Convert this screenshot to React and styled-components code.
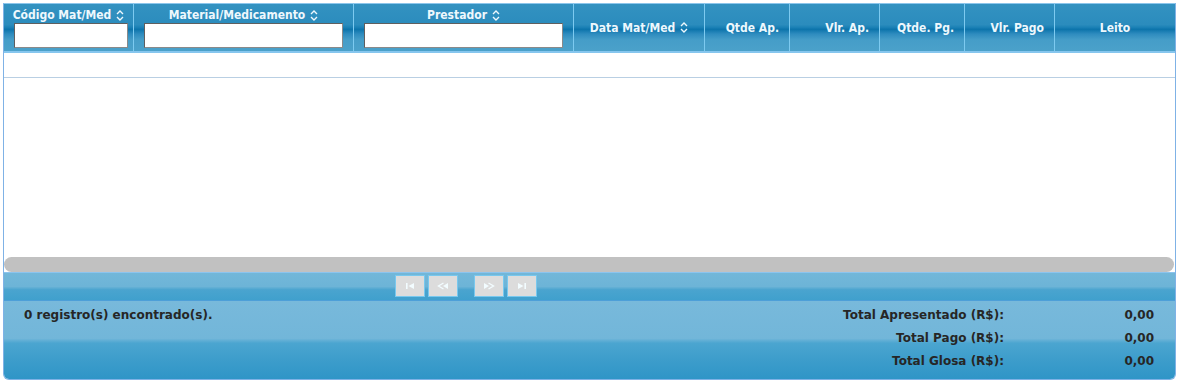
import React from 'react';
import styled, { createGlobalStyle } from 'styled-components';

const GlobalStyle = createGlobalStyle`
  html, body {
    margin: 0;
    padding: 0;
    background: #ffffff;
  }
  body {
    font-family: "DejaVu Sans", Verdana, sans-serif;
    font-size: 12px;
  }
`;

const Page = styled.div`
  padding: 3px 4px 2px 3px;
`;

const Panel = styled.div`
  width: 1171px;
  border: 1px solid #7fb2e6;
  border-top-color: #8cc6ec;
  border-radius: 0 0 6px 6px;
  overflow: hidden;
`;

const HeaderRow = styled.div`
  display: flex;
  height: 47px;
  border-bottom: 2px solid #86c6ee;
  background: linear-gradient(
    to bottom,
    #3392c1 0%,
    #2b8cbd 44%,
    #1a80b5 50%,
    #0c74ab 54%,
    #2f8cbf 64%,
    #459dc8 76%,
    #4ba1ca 100%
  );
  color: #eef8fd;
  font-family: "DejaVu Sans Condensed", "DejaVu Sans", sans-serif;
  font-weight: bold;
`;

const HeadCell = styled.div`
  width: ${(p) => p.$w}px;
  flex: ${(p) => (p.$grow ? '1' : 'none')};
  box-sizing: border-box;
  border-right: ${(p) => (p.$last ? 'none' : '1px solid #7dcaf0')};
  display: flex;
  flex-direction: column;
  align-items: ${(p) => (p.$filter ? 'center' : 'stretch')};
  justify-content: ${(p) => (p.$filter ? 'flex-start' : 'center')};
  padding: ${(p) => (p.$filter ? '4px 0 0' : '0 10px 0 10px')};
  text-align: ${(p) => p.$align || 'center'};
  white-space: nowrap;
`;

const Title = styled.div`
  display: flex;
  align-items: center;
  justify-content: ${(p) => p.$justify || 'center'};
  gap: 5px;
  line-height: 14px;
`;

const FilterInput = styled.input`
  box-sizing: border-box;
  width: ${(p) => p.$w}px;
  height: 25px;
  margin-top: 1px;
  margin-left: ${(p) => p.$shift || 0}px;
  border: 1px solid #5f5f5f;
  border-right-color: #8a8a8a;
  border-bottom-color: #8a8a8a;
  background: #ffffff;
  padding: 0 4px;
  outline: none;
`;

const Body = styled.div`
  height: 219px;
  background: #ffffff;
  display: flex;
  flex-direction: column;
`;

const EmptyRow = styled.div`
  height: 24px;
  border-bottom: 1px solid #b9cfe3;
`;

const Spacer = styled.div`
  flex: 1;
`;

const ScrollThumb = styled.div`
  height: 15px;
  margin: 0 1px 0 0;
  background: #c1c1c1;
  border-radius: 8px;
`;

const Paginator = styled.div`
  height: 25px;
  border-top: 1px solid #8cc4ee;
  border-bottom: 1px solid #4d9fd8;
  display: flex;
  align-items: flex-start;
  padding: 2px 0 0 391px;
  gap: 3px;
  background: linear-gradient(
    to bottom,
    #72b7d9 0%,
    #6db4d7 50%,
    #4aa4cf 62%,
    #40a0cd 100%
  );
`;

const PageButton = styled.div`
  width: 28px;
  height: 20px;
  border: 1px solid #78c8ee;
  background: #dcdcdc;
  display: flex;
  align-items: center;
  justify-content: center;
  margin-left: ${(p) => (p.$gap ? 13 : 0)}px;
`;

const Footer = styled.div`
  height: 75px;
  padding: 3px 21px 0 20px;
  display: flex;
  align-items: flex-start;
  justify-content: space-between;
  color: #262626;
  font-weight: bold;
  background: linear-gradient(
    to bottom,
    #78b9db 0%,
    #72b6d9 48%,
    #4ba5d0 54%,
    #3d9dcb 75%,
    #2f95c7 100%
  );
`;

const Count = styled.div`
  line-height: 23px;
`;

const Totals = styled.div`
  display: grid;
  grid-template-columns: auto 150px;
  grid-auto-rows: 23px;
  line-height: 23px;
  text-align: right;
`;

function SortIcon() {
  return (
    <svg width="8" height="11" viewBox="0 0 8 11" fill="none">
      <path d="M1 4 L4 1 L7 4" stroke="#eef8fd" strokeWidth="1.4" />
      <path d="M1 7 L4 10 L7 7" stroke="#eef8fd" strokeWidth="1.4" />
    </svg>
  );
}

function NavIcon({ kind }) {
  const c = '#f2fcff';
  const shapes = {
    first: (
      <>
        <rect x="2" y="1" width="1.6" height="6" fill={c} />
        <path d="M10 1 L4.5 4 L10 7 Z" fill={c} />
      </>
    ),
    prev: (
      <>
        <path d="M6.5 1 L1.5 4 L6.5 7" stroke={c} strokeWidth="1.4" fill="none" />
        <path d="M11 1 L6 4 L11 7 Z" fill={c} />
      </>
    ),
    next: (
      <>
        <path d="M1 1 L6 4 L1 7 Z" fill={c} />
        <path d="M5.5 1 L10.5 4 L5.5 7" stroke={c} strokeWidth="1.4" fill="none" />
      </>
    ),
    last: (
      <>
        <path d="M2 1 L7.5 4 L2 7 Z" fill={c} />
        <rect x="8.4" y="1" width="1.6" height="6" fill={c} />
      </>
    ),
  };
  return (
    <svg width="12" height="8" viewBox="0 0 12 8">
      {shapes[kind]}
    </svg>
  );
}

const columns = [
  { title: 'Código Mat/Med', w: 130, filter: 114, shift: 5, sort: true },
  { title: 'Material/Medicamento', w: 220, filter: 199, sort: true },
  { title: 'Prestador', w: 220, filter: 199, sort: true },
  { title: 'Data Mat/Med', w: 131, sort: true },
  { title: 'Qtde Ap.', w: 85, align: 'right' },
  { title: 'Vlr. Ap.', w: 90, align: 'right' },
  { title: 'Qtde. Pg.', w: 85, align: 'right' },
  { title: 'Vlr. Pago', w: 90, align: 'right' },
  { title: 'Leito', grow: true, last: true },
];

const totals = [
  ['Total Apresentado (R$):', '0,00'],
  ['Total Pago (R$):', '0,00'],
  ['Total Glosa (R$):', '0,00'],
];

export default function App() {
  return (
    <Page>
      <GlobalStyle />
      <Panel>
        <HeaderRow>
          {columns.map((col) => (
            <HeadCell
              key={col.title}
              $w={col.w}
              $grow={col.grow}
              $last={col.last}
              $filter={!!col.filter}
              $align={col.align}
            >
              <Title $justify={col.align === 'right' ? 'flex-end' : 'center'}>
                {col.title}
                {col.sort && <SortIcon />}
              </Title>
              {col.filter && <FilterInput $w={col.filter} $shift={col.shift} />}
            </HeadCell>
          ))}
        </HeaderRow>
        <Body>
          <EmptyRow />
          <Spacer />
          <ScrollThumb />
        </Body>
        <Paginator>
          <PageButton><NavIcon kind="first" /></PageButton>
          <PageButton><NavIcon kind="prev" /></PageButton>
          <PageButton $gap><NavIcon kind="next" /></PageButton>
          <PageButton><NavIcon kind="last" /></PageButton>
        </Paginator>
        <Footer>
          <Count>0 registro(s) encontrado(s).</Count>
          <Totals>
            {totals.map(([label, value]) => (
              <React.Fragment key={label}>
                <span>{label}</span>
                <span>{value}</span>
              </React.Fragment>
            ))}
          </Totals>
        </Footer>
      </Panel>
    </Page>
  );
}
